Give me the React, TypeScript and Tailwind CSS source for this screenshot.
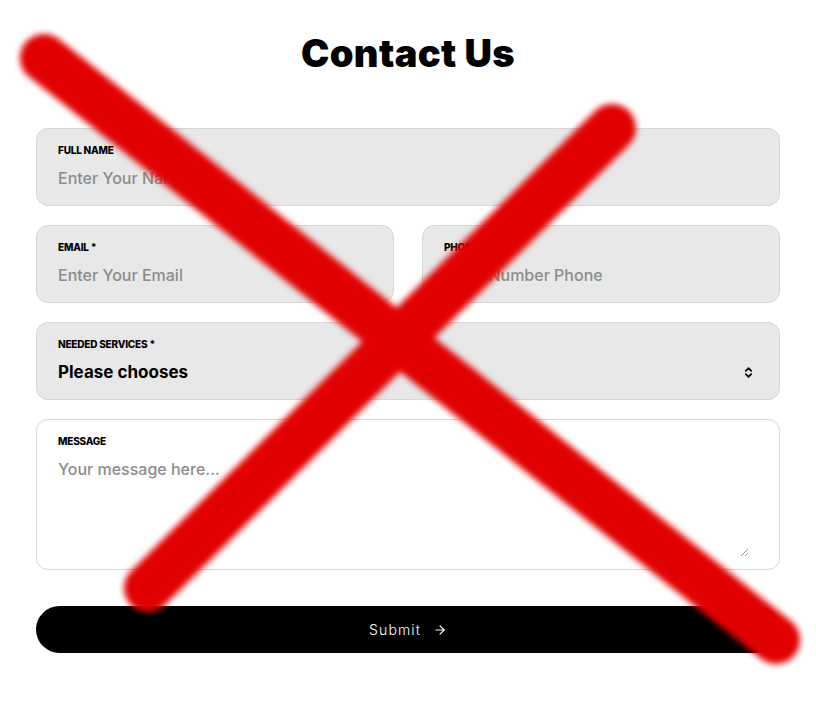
import { ArrowRight, ChevronsUpDown } from 'lucide-react';

const inputBox =
  'rounded-xl border border-[#d6d6d6] bg-[#e8e8e8] px-[21px] pt-[14px] pb-[16px] flex flex-col gap-[10px]';
const labelText = 'text-[10px] font-extrabold uppercase tracking-[-0.02em] text-black leading-[14px]';
const placeholderText = 'text-[16px] font-medium text-[#8c8c8c] leading-[22px]';

function Field({ label, placeholder, required }: { label: string; placeholder: string; required?: boolean }) {
  return (
    <div className={inputBox}>
      <span className={labelText}>
        {label}
        {required && ' *'}
      </span>
      <span className={placeholderText}>{placeholder}</span>
    </div>
  );
}

export default function App() {
  return (
    <div className="relative min-h-[709px] w-[816px] overflow-hidden bg-white font-['Inter','Noto_Sans',sans-serif]">
      <div className="px-9 pt-[30px]">
        <h1 className="text-center text-[38px] font-black leading-[46px] tracking-[0.01em] text-black">
          Contact Us
        </h1>

        <form className="mt-[52px] flex flex-col gap-[19px]">
          <Field label="Full Name" placeholder="Enter Your Name" />

          <div className="grid grid-cols-2 gap-[28px]">
            <Field label="Email" placeholder="Enter Your Email" required />
            <Field label="Phone" placeholder="Enter Number Phone" required />
          </div>

          <div className={inputBox}>
            <span className={labelText}>Needed Services *</span>
            <div className="flex items-center justify-between">
              <span className="text-[17px] font-bold leading-[22px] text-black">Please chooses</span>
              <ChevronsUpDown className="mr-[3px] h-[13px] w-[13px] text-black" strokeWidth={3.2} />
            </div>
          </div>

          <div className="relative flex h-[151px] flex-col gap-[10px] rounded-xl border border-[#d6d6d6] bg-white px-[21px] pt-[14px]">
            <span className={labelText}>Message</span>
            <span className={placeholderText}>Your message here...</span>
            {/* textarea resize grip */}
            <svg className="absolute bottom-[12px] right-[30px]" width="9" height="9" viewBox="0 0 9 9">
              <path d="M8 1 L1 8 M8 5 L5 8" stroke="#9a9a9a" strokeWidth="1" fill="none" />
            </svg>
          </div>

          <button
            type="button"
            className="mt-[17px] flex h-[47px] items-center justify-center gap-3 rounded-full bg-black text-[14px] font-light tracking-[0.08em] text-white"
          >
            Submit
            <ArrowRight className="h-[14px] w-[14px]" strokeWidth={2} />
          </button>
        </form>
      </div>

      {/* red cross stamped over the form */}
      <svg className="pointer-events-none absolute inset-0 blur-[3px]" width="816" height="709" viewBox="0 0 816 709">
        <g stroke="#e10000" strokeWidth="48" strokeLinecap="round" fill="none">
          <line x1="44" y1="58" x2="776" y2="640" />
          <line x1="612" y1="128" x2="148" y2="588" />
        </g>
      </svg>
    </div>
  );
}
